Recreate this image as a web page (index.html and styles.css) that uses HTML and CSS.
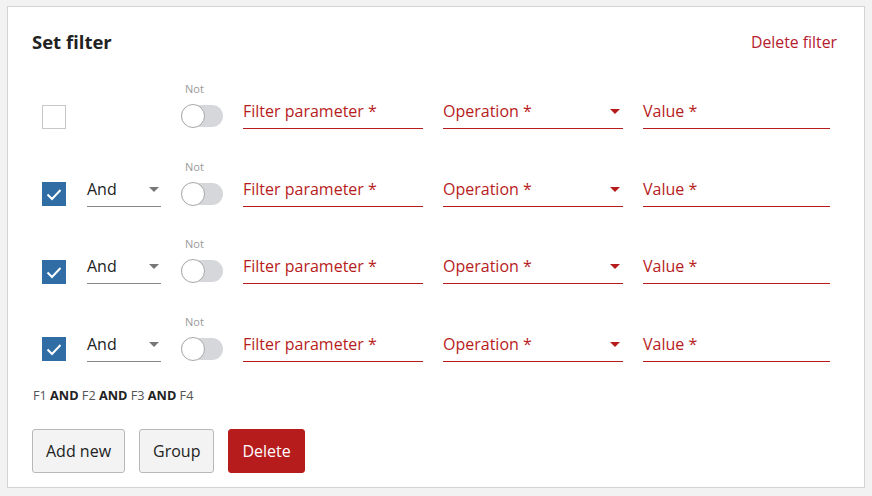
FILE: index.html
```html
<!DOCTYPE html>
<html>
<head>
<meta charset="utf-8">
<link rel="stylesheet" href="styles.css">
</head>
<body>
<div class="card">
  <div class="header">
    <h1 class="title">Set filter</h1>
    <a class="delete-link">Delete filter</a>
  </div>
  <div class="rows">
    <div class="row">
      <span class="checkbox"></span>
      <span class="logic empty"></span>
      <div class="not">
        <span class="not-label">Not</span>
        <span class="toggle"><span class="knob"></span></span>
      </div>
      <div class="field">Filter parameter *</div>
      <div class="field select">Operation *<span class="caret red"></span></div>
      <div class="field value">Value *</div>
    </div>
    <div class="row">
      <span class="checkbox checked"><svg viewBox="0 0 24 24" width="24" height="24"><path d="M5.5 12.5l4.5 4.5 8.5-9" fill="none" stroke="#fff" stroke-width="2"/></svg></span>
      <div class="logic">And<span class="caret"></span></div>
      <div class="not">
        <span class="not-label">Not</span>
        <span class="toggle"><span class="knob"></span></span>
      </div>
      <div class="field">Filter parameter *</div>
      <div class="field select">Operation *<span class="caret red"></span></div>
      <div class="field value">Value *</div>
    </div>
    <div class="row">
      <span class="checkbox checked"><svg viewBox="0 0 24 24" width="24" height="24"><path d="M5.5 12.5l4.5 4.5 8.5-9" fill="none" stroke="#fff" stroke-width="2"/></svg></span>
      <div class="logic">And<span class="caret"></span></div>
      <div class="not">
        <span class="not-label">Not</span>
        <span class="toggle"><span class="knob"></span></span>
      </div>
      <div class="field">Filter parameter *</div>
      <div class="field select">Operation *<span class="caret red"></span></div>
      <div class="field value">Value *</div>
    </div>
    <div class="row">
      <span class="checkbox checked"><svg viewBox="0 0 24 24" width="24" height="24"><path d="M5.5 12.5l4.5 4.5 8.5-9" fill="none" stroke="#fff" stroke-width="2"/></svg></span>
      <div class="logic">And<span class="caret"></span></div>
      <div class="not">
        <span class="not-label">Not</span>
        <span class="toggle"><span class="knob"></span></span>
      </div>
      <div class="field">Filter parameter *</div>
      <div class="field select">Operation *<span class="caret red"></span></div>
      <div class="field value">Value *</div>
    </div>
  </div>
  <p class="formula">F1 <b>AND</b> F2 <b>AND</b> F3 <b>AND</b> F4</p>
  <div class="actions">
    <button class="btn">Add new</button>
    <button class="btn">Group</button>
    <button class="btn danger">Delete</button>
  </div>
</div>
</body>
</html>
```
FILE: styles.css
```css
html, body {
  margin: 0;
  padding: 0;
  background: #f2f2f2;
  font-family: "Open Sans", "DejaVu Sans", sans-serif;
}
body {
  padding: 6px 7px 8px 7px;
}
.card {
  background: #fff;
  border: 1px solid #d3d3d6;
  height: 482px;
  box-sizing: border-box;
  padding: 0 27px 0 24px;
}
.header {
  display: flex;
  justify-content: space-between;
  align-items: center;
  height: 69px;
}
.title {
  margin: 0;
  font-size: 18.5px;
  font-weight: 700;
  color: #222;
}
.delete-link {
  color: #b5202e;
  font-size: 15.8px;
  margin-top: 0;
}
.rows {
  padding-left: 10px;
  margin-top: -24.5px;
}
.row {
  display: flex;
  align-items: flex-end;
  height: 77.5px;
}
.checkbox {
  width: 24px;
  height: 24px;
  box-sizing: border-box;
  border: 1px solid #c8c8c8;
  margin-bottom: 0.5px;
  display: block;
}
.checkbox.checked {
  background: #2f6da4;
  border-color: #2f6da4;
}
.checkbox svg {
  display: block;
  margin: -1px;
}
.logic {
  width: 74px;
  margin-left: 21px;
  box-sizing: border-box;
  border-bottom: 1px solid #888;
  font-size: 16px;
  color: #222;
  height: 32px;
  line-height: 28px;
  position: relative;
}
.logic.empty {
  border-bottom: none;
  display: block;
}
.caret {
  position: absolute;
  right: 2px;
  top: 12px;
  width: 0;
  height: 0;
  border-left: 5px solid transparent;
  border-right: 5px solid transparent;
  border-top: 5px solid #777;
}
.caret.red {
  border-top-color: #b71c1c;
  right: 3px;
}
.not {
  margin-left: 20px;
  display: flex;
  flex-direction: column;
  align-items: center;
  width: 42px;
}
.not-label {
  font-size: 11px;
  color: #9a9a9a;
  line-height: 14px;
  margin-bottom: 9px;
  margin-left: -15px;
}
.toggle {
  display: block;
  width: 42px;
  height: 22px;
  border-radius: 11px;
  background: #d5d7da;
  position: relative;
  margin-bottom: 2px;
}
.knob {
  position: absolute;
  left: 0;
  top: -1px;
  width: 24px;
  height: 24px;
  box-sizing: border-box;
  border-radius: 50%;
  background: #fff;
  border: 1px solid #a8a8a8;
}
.field {
  width: 180px;
  margin-left: 20px;
  box-sizing: border-box;
  border-bottom: 1px solid #b71c1c;
  color: #b71c1c;
  font-size: 16px;
  height: 32px;
  line-height: 28px;
  position: relative;
}
.field.value {
  width: 187px;
}
.formula {
  margin: 25px 0 0 1px;
  font-size: 12.7px;
  color: #555;
  line-height: 16px;
}
.formula b {
  color: #222;
}
.actions {
  display: flex;
  gap: 14px;
  margin-top: 26px;
}
.btn {
  font-family: "Open Sans", "DejaVu Sans", sans-serif;
  font-size: 16px;
  height: 44px;
  padding: 0 13px;
  background: #f3f3f3;
  border: 1px solid #b8b8b8;
  border-radius: 3px;
  color: #222;
}
.btn.danger {
  background: #b71c1c;
  border-color: #b71c1c;
  color: #fff;
}
```
